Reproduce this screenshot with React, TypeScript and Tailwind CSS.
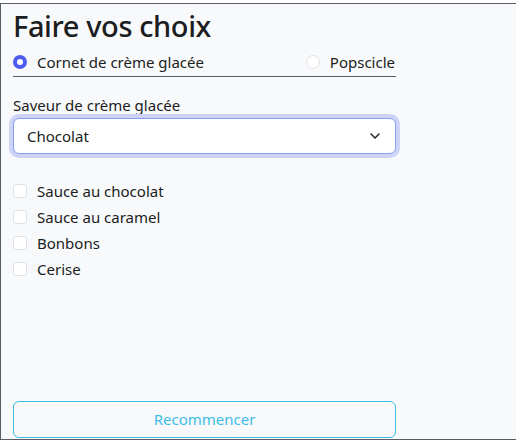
import { ChevronDown } from 'lucide-react';
import { useState } from 'react';

const toppings = ['Sauce au chocolat', 'Sauce au caramel', 'Bonbons', 'Cerise'];

const App = () => {
  const [kind, setKind] = useState('cornet');
  const [checked, setChecked] = useState<string[]>([]);

  const toggle = (t: string) =>
    setChecked((c) => (c.includes(t) ? c.filter((x) => x !== t) : [...c, t]));

  return (
    <div className="w-[516px] h-[445px] bg-white overflow-hidden" style={{ fontFamily: '"Noto Sans", "Open Sans", sans-serif' }}>
      <div className="mt-[3px] w-[530px] h-[437px] border-l border-t border-b border-[#5a5e66] bg-[#f8f9fb] pl-3 flex flex-col text-[#1b1d21]">
        <div className="w-[383px] flex flex-col flex-1">
          <h1 className="text-[29px] leading-[36px] font-medium tracking-[-0.4px] mt-[4px]">Faire vos choix</h1>

          {/* type */}
          <div className="flex items-center justify-between border-b border-[#5a5e66] h-[33px] pt-[4px]">
            <label className="flex items-center gap-[10px] text-[15px] cursor-pointer" onClick={() => setKind('cornet')}>
              <span
                className={
                  kind === 'cornet'
                    ? 'w-[14px] h-[14px] rounded-full border-[4px] border-[#4f5cf0] bg-white'
                    : 'w-[14px] h-[14px] rounded-full border border-[#dee2e6] bg-white'
                }
              />
              Cornet de crème glacée
            </label>
            <label className="flex items-center gap-[10px] text-[15px] cursor-pointer mr-[1px]" onClick={() => setKind('popscicle')}>
              <span
                className={
                  kind === 'popscicle'
                    ? 'w-[14px] h-[14px] rounded-full border-[4px] border-[#4f5cf0] bg-white'
                    : 'w-[14px] h-[14px] rounded-full border border-[#dee2e6] bg-white'
                }
              />
              Popscicle
            </label>
          </div>

          {/* flavour */}
          <div className="mt-[17px] text-[15px] leading-[22px]">Saveur de crème glacée</div>
          <div className="mt-[2px] h-[36px] rounded-[6px] border border-[#86a0f0] bg-white shadow-[0_0_0_4px_#cfd3fa] flex items-center justify-between pl-[13px] pr-[12px] text-[15px]">
            <span>Chocolat</span>
            <ChevronDown className="w-[16px] h-[16px] text-[#222]" strokeWidth={2.2} />
          </div>

          {/* toppings */}
          <div className="mt-[24px] flex flex-col">
            {toppings.map((t) => (
              <label key={t} className="flex items-center gap-[10px] h-[26px] text-[15px] cursor-pointer" onClick={() => toggle(t)}>
                <span
                  className={
                    checked.includes(t)
                      ? 'w-[14px] h-[14px] rounded-[3px] bg-[#4f5cf0] border border-[#4f5cf0]'
                      : 'w-[14px] h-[14px] rounded-[3px] bg-white border border-[#dee2e6]'
                  }
                />
                {t}
              </label>
            ))}
          </div>

          <div className="flex-1" />

          <button
            className="h-[37px] mb-[1px] rounded-[6px] border border-[#3dbde6] text-[#3dbde6] text-[15px]"
            onClick={() => {
              setKind('cornet');
              setChecked([]);
            }}
          >
            Recommencer
          </button>
        </div>
      </div>
    </div>
  );
};

export default App;
